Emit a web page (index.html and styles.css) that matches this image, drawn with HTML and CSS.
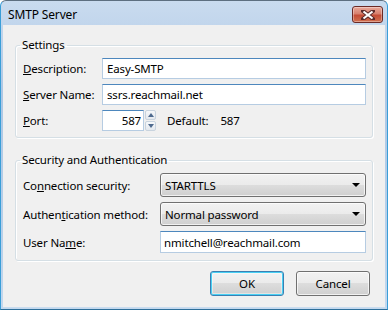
FILE: index.html
```html
<!DOCTYPE html>
<html lang="en">
<head>
  <meta charset="UTF-8">
  <title>SMTP Server</title>
  <link rel="stylesheet" href="styles.css">
</head>
<body>
  <div class="window">
    <div class="titlebar">
      <span class="title">SMTP Server</span>
      <button class="close-btn" aria-label="Close">
        <svg width="14" height="10" viewBox="0 0 14 10">
          <path d="M2 1 L12 9 M12 1 L2 9" stroke="#5a2a2a" stroke-width="4" stroke-linecap="square"/>
          <path d="M2.5 1.5 L11.5 8.5 M11.5 1.5 L2.5 8.5" stroke="#fff" stroke-width="2.2"/>
        </svg>
      </button>
    </div>

    <div class="client">
      <fieldset class="group settings">
        <legend>Settings</legend>
        <div class="row">
          <label><u>D</u>escription:</label>
          <input class="text" type="text" value="Easy-SMTP">
        </div>
        <div class="row">
          <label><u>S</u>erver Name:</label>
          <input class="text" type="text" value="ssrs.reachmail.net">
        </div>
        <div class="row">
          <label><u>P</u>ort:</label>
          <div class="port">
            <input class="text port-input" type="text" value="587">
            <div class="spinner">
              <span class="spin up"></span>
              <span class="spin down"></span>
            </div>
            <span class="default-label">Default:</span>
            <span class="default-value">587</span>
          </div>
        </div>
      </fieldset>

      <fieldset class="group security">
        <legend>Security and Authentication</legend>
        <div class="row combo-row">
          <label>Co<u>n</u>nection security:</label>
          <div class="combo"><span>STARTTLS</span><span class="arrow"></span></div>
        </div>
        <div class="row combo-row">
          <label>Authen<u>t</u>ication method:</label>
          <div class="combo"><span>Normal password</span><span class="arrow"></span></div>
        </div>
        <div class="row user-row">
          <label>User Na<u>m</u>e:</label>
          <input class="text" type="text" value="nmitchell@reachmail.com">
        </div>
      </fieldset>

      <div class="buttons">
        <button class="btn default">OK</button>
        <button class="btn">Cancel</button>
      </div>
    </div>
  </div>
</body>
</html>
```

FILE: styles.css
```css
body {
  margin: 0;
  font-family: 'Noto Sans', 'Open Sans', sans-serif;
  font-size: 11.5px;
  letter-spacing: -0.15px;
  color: #000;
}
.window {
  width: 388px;
  height: 310px;
  box-sizing: border-box;
  border: 1px solid #3a9ed8;
  border-top-color: #5d6f80;
  border-bottom-color: #2d6f9a;
  border-radius: 6px 6px 0 0;
  background: linear-gradient(#c9dbef, #adc7e4 30%, #b9d1ea 80%, #c3d8ee);
  padding: 0 2px 1px 2px;
  display: flex;
  flex-direction: column;
}
.titlebar {
  height: 24px;
  display: flex;
  align-items: center;
  justify-content: space-between;
  padding: 0 2px 0 5px;
}
.title {
  font-size: 12px;
  color: #000;
  margin-top: 2px;
}
.close-btn {
  width: 31px;
  height: 17px;
  margin-top: 3px;
  padding: 0;
  border: 1px solid #6b2a26;
  border-radius: 3px;
  background: linear-gradient(#e9a99b, #d7806e 45%, #c44c36 55%, #d0704f);
  box-shadow: inset 0 0 0 1px rgba(255,255,255,0.35);
  display: flex;
  align-items: center;
  justify-content: center;
}
.client {
  flex: 1;
  background: #f0f0f0;
  border-bottom: 1px solid #c9dcef;
  padding: 12px 12px 0 12px;
  display: flex;
  flex-direction: column;
}
.group {
  margin: 0;
  border: 1px solid #d5dfe5;
  border-radius: 3px;
  box-shadow: inset 1px 1px 0 #fff, 1px 1px 0 #fff;
  padding: 5px 6px 6px 7px;
  min-width: 0;
}
.group legend {
  padding: 0 2px;
  margin-left: -3px;
  line-height: 16px;
}
.security {
  margin-top: 14px;
  padding-bottom: 7px;
}
.row {
  display: flex;
  align-items: center;
  height: 21px;
}
.row + .row {
  margin-top: 5px;
}
.settings label {
  width: 79px;
  flex: none;
}
.security label {
  width: 137px;
  flex: none;
}
.text {
  flex: 1;
  min-width: 0;
  height: 21px;
  box-sizing: border-box;
  border: 1px solid #b6cce2;
  border-top-color: #4d87bd;
  background: #fff;
  font: inherit;
  letter-spacing: inherit;
  padding: 0 4px;
  outline: none;
}
.port {
  flex: 1;
  display: flex;
  align-items: center;
}
.port-input {
  flex: none;
  width: 42px;
  text-align: right;
  padding-right: 2px;
}
.spinner {
  width: 11px;
  height: 21px;
  margin-left: 1px;
  display: flex;
  flex-direction: column;
  gap: 1px;
}
.spin {
  flex: 1;
  border: 1px solid #c8d3de;
  border-radius: 2px;
  background: linear-gradient(#f6f8fa, #e3e8ee);
  position: relative;
}
.spin::after {
  content: "";
  position: absolute;
  left: 2px;
  top: 2px;
  border-left: 3px solid transparent;
  border-right: 3px solid transparent;
}
.spin.up::after {
  border-bottom: 4px solid #4e6a8e;
}
.spin.down::after {
  border-top: 4px solid #4e6a8e;
}
.default-label {
  margin-left: 11px;
}
.default-value {
  margin-left: 12px;
}
.combo-row {
  height: 24px;
}
.combo-row + .combo-row {
  margin-top: 5px;
}
.user-row {
  height: 22px;
}
.user-row .text {
  height: 22px;
  padding-left: 3px;
}
.combo {
  flex: 1;
  height: 24px;
  box-sizing: border-box;
  border: 1px solid #707070;
  border-radius: 3px;
  background: linear-gradient(#f2f2f2, #ebebeb 50%, #dddddd 50%, #cfcfcf);
  box-shadow: inset 0 0 0 1px rgba(255,255,255,0.7);
  display: flex;
  align-items: center;
  justify-content: space-between;
  padding: 0 5px 0 4px;
}
.arrow {
  border-left: 4px solid transparent;
  border-right: 4px solid transparent;
  border-top: 4px solid #000;
}
.buttons {
  display: flex;
  justify-content: flex-end;
  gap: 12px;
  margin-top: 10px;
  padding-right: 3px;
}
.btn {
  width: 74px;
  height: 25px;
  font: inherit;
  letter-spacing: inherit;
  border: 1px solid #707070;
  border-radius: 3px;
  background: linear-gradient(#f2f2f2, #ebebeb 50%, #dddddd 50%, #cfcfcf);
  box-shadow: inset 0 0 0 1px rgba(255,255,255,0.7);
  padding: 0;
}
.btn.default {
  border-color: #3c7fb1;
  box-shadow: inset 0 0 0 1px #48d0f4, inset 0 0 0 2px rgba(255,255,255,0.4);
}
```
